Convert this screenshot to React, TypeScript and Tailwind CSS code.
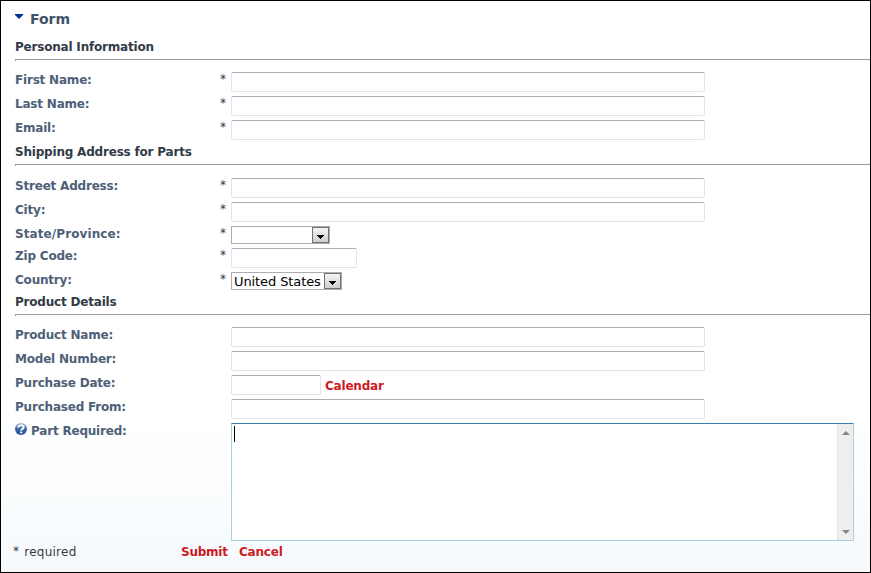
import type { ReactNode } from "react";

const inputBase =
  "h-5 rounded-[2px] border border-[#e2e3ea] border-t-[#abadb3] bg-white outline-none";

function Section({ title, height }: { title: string; height: string }) {
  return (
    <div className={height}>
      <h2 className="h-5 text-[12px] leading-[17px] font-bold tracking-[-0.2px] text-[#333b47]">
        {title}
      </h2>
      <div className="h-[2px] border-t border-l border-[#9a9a9a]" />
    </div>
  );
}

function Row({
  label,
  required,
  height = "h-6",
  tracking = "tracking-[-0.2px]",
  icon,
  children,
}: {
  label: string;
  required?: boolean;
  height?: string;
  tracking?: string;
  icon?: ReactNode;
  children: ReactNode;
}) {
  return (
    <div className={`flex items-start ${height}`}>
      <div className="flex w-[205px] items-start text-[12px] leading-[17px] font-bold text-[#4e6078]">
        {icon}
        <span className={tracking}>{label}</span>
      </div>
      <span className="w-[11px] text-[12px] leading-[15px] text-[#333b47]">{required ? "*" : ""}</span>
      {children}
    </div>
  );
}

function Wide() {
  return <input className={`${inputBase} w-[474px]`} />;
}

function Dropdown({ value, width }: { value: string; width: string }) {
  return (
    <div className={`flex h-[18px] border border-[#abadb3] bg-white ${width}`}>
      <span className="flex-1 pl-[2px] text-[13px] leading-[17px] tracking-[-0.1px] whitespace-nowrap text-black">
        {value}
      </span>
      <span className="flex h-4 w-[17px] items-center justify-center border border-[#707070] bg-linear-to-b from-[#f4f4f4] to-[#cfcfcf]">
        <svg width="7" height="4" viewBox="0 0 7 4" className="mt-[3px]" shapeRendering="crispEdges">
          <path d="M0 0h7v1H6v1H5v1H4v1H3V3H2V2H1V1H0z" fill="#000" />
        </svg>
      </span>
    </div>
  );
}

function HelpIcon() {
  return (
    <svg width="12" height="12" viewBox="0 0 12 12" className="mr-1 shrink-0">
      <defs>
        <linearGradient id="help" x1="0" y1="0" x2="0" y2="1">
          <stop offset="0" stopColor="#a9bcd6" />
          <stop offset="0.45" stopColor="#3f6ca9" />
          <stop offset="1" stopColor="#1d4f92" />
        </linearGradient>
      </defs>
      <circle cx="6" cy="6" r="6" fill="url(#help)" />
      <path d="M3.3 4.4C3.3 1.7 8.7 1.6 8.7 4.3C8.7 6 6.2 5.8 6.2 7.6" fill="none" stroke="#fff" strokeWidth="1.9" />
      <rect x="5.2" y="8.5" width="2" height="1.8" fill="#fff" />
    </svg>
  );
}

export default function App() {
  return (
    <main
      className="flex h-[573px] w-[871px] flex-col overflow-hidden border border-black bg-linear-to-b from-white from-72% to-[#f6fafd] pl-[14px]"
      style={{ fontFamily: '"DejaVu Sans", Verdana, sans-serif' }}
    >
      <header className="flex h-[38px] items-start pt-[9px]">
        <svg width="8" height="5" viewBox="0 0 8 5" className="mt-[4px] mr-[7px]">
          <path d="M0 0h8v1L4 5L0 1z" fill="#003399" />
        </svg>
        <h1 className="text-[14px] leading-[18px] font-bold text-[#3f5369]">Form</h1>
      </header>

      <Section title="Personal Information" height="h-[33px]" />
      <Row label="First Name:" required><Wide /></Row>
      <Row label="Last Name:" required><Wide /></Row>
      <Row label="Email:" required><Wide /></Row>

      <Section title="Shipping Address for Parts" height="h-[34px]" />
      <Row label="Street Address:" required><Wide /></Row>
      <Row label="City:" required><Wide /></Row>
      <Row label="State/Province:" required height="h-[22px]" tracking="tracking-[0.1px]">
        <Dropdown value="" width="w-[99px]" />
      </Row>
      <Row label="Zip Code:" required>
        <input className={`${inputBase} w-[126px]`} />
      </Row>
      <Row label="Country:" required height="h-[22px]">
        <Dropdown value="United States" width="w-[111px]" />
      </Row>

      <Section title="Product Details" height="h-[33px]" />
      <Row label="Product Name:"><Wide /></Row>
      <Row label="Model Number:"><Wide /></Row>
      <Row label="Purchase Date:">
        <input className={`${inputBase} w-[90px]`} />
        <a className="ml-1 pt-[3px] text-[12px] leading-[17px] font-bold tracking-[-0.2px] text-[#cc1a22]">Calendar</a>
      </Row>
      <Row label="Purchased From:"><Wide /></Row>
      <Row label="Part Required:" height="h-[118px]" icon={<HelpIcon />}>
        <div className="flex h-[118px] w-[623px] justify-between rounded-[1px] border border-[#a9cfe3] border-t-[#3d7bad] bg-white">
          <div className="mt-[2px] ml-[2px] h-4 w-px bg-black" />
          <div className="flex w-4 flex-col items-center justify-between border-l border-[#e3e3e3] bg-[#eeeeee] pt-[7px] pb-[6px]">
            <svg width="8" height="4" viewBox="0 0 8 4"><path d="M4 0L8 4H0z" fill="#858585" /></svg>
            <svg width="8" height="4" viewBox="0 0 8 4"><path d="M0 0h8L4 4z" fill="#858585" /></svg>
          </div>
        </div>
      </Row>

      <footer className="-ml-[3px] flex pt-[3px] text-[12px] leading-[17px]">
        <span className="flex w-[169px] gap-[5px] pl-px tracking-[0.25px] text-[#333b47]">
          <span className="leading-[15px]">*</span>
          <span>required</span>
        </span>
        <a className="w-[58px] font-bold tracking-[-0.25px] text-[#cc1a22]">Submit</a>
        <a className="font-bold tracking-[-0.2px] text-[#cc1a22]">Cancel</a>
      </footer>
    </main>
  );
}
